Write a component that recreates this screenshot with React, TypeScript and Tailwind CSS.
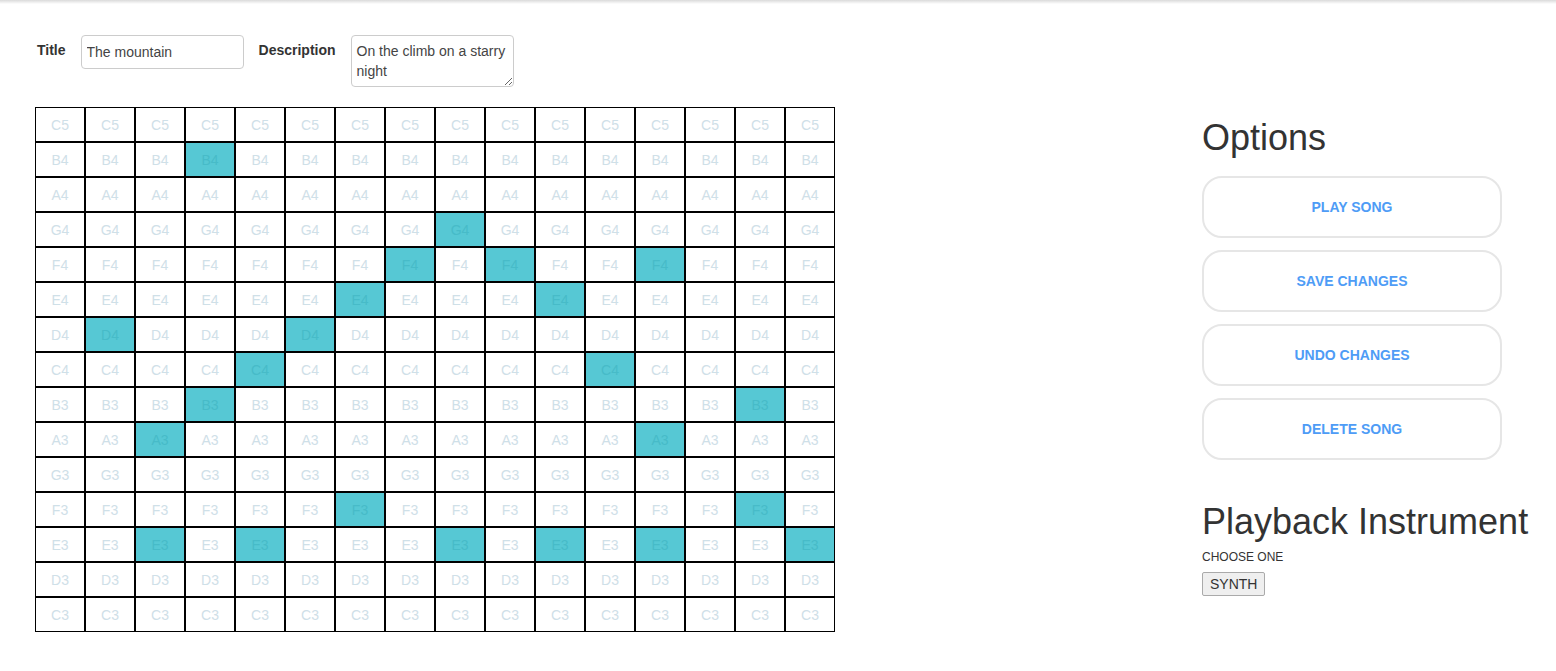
import React from 'react';

const NOTES = ['C5', 'B4', 'A4', 'G4', 'F4', 'E4', 'D4', 'C4', 'B3', 'A3', 'G3', 'F3', 'E3', 'D3', 'C3'];

// active columns for each note row
const ACTIVE: Record<string, number[]> = {
  B4: [3],
  G4: [8],
  F4: [7, 9, 12],
  E4: [6, 10],
  D4: [1, 5],
  C4: [4, 11],
  B3: [3, 14],
  A3: [2, 12],
  F3: [6, 14],
  E3: [2, 4, 8, 10, 12, 15],
};

const COLS = Array.from({ length: 16 }, (_, i) => i);

function NoteGrid() {
  return (
    <div className="grid grid-cols-[repeat(16,50px)] w-[800px]">
      {NOTES.map((note) =>
        COLS.map((col) => {
          const on = ACTIVE[note]?.includes(col);
          return (
            <div
              key={`${note}-${col}`}
              className={`h-[35px] pt-[1px] border border-black flex items-center justify-center text-[14px] ${
                on ? 'bg-[#56c8d4] text-[#47bbc8]' : 'bg-white text-[#cfe0e8]'
              }`}
            >
              {note}
            </div>
          );
        })
      )}
    </div>
  );
}

const OPTIONS = ['Play Song', 'Save Changes', 'Undo Changes', 'Delete Song'];

export default function App() {
  return (
    <div className="w-full bg-white text-[#333] font-['Liberation_Sans',Arial,sans-serif]">
      <div className="h-[4px] bg-gradient-to-b from-[#dadada] to-white" />
      <div className="flex pt-[31px] pl-[35px] pr-[54px] pb-[39px]">
        {/* Editor */}
        <div className="flex flex-col">
          <div className="flex items-start gap-[15px] ml-[2px] text-[14px]">
            <label className="mt-[5px] leading-[20px] font-bold">Title</label>
            <input
              defaultValue="The mountain"
              className="w-[163px] h-[34px] px-[5px] border border-[#ccc] rounded-[4px] text-[#444] leading-[20px] outline-none"
            />
            <label className="mt-[5px] leading-[20px] font-bold">Description</label>
            <textarea
              defaultValue="On the climb on a starry night"
              className="w-[163px] h-[52px] px-[5px] py-[5px] border border-[#ccc] rounded-[4px] text-[#444] leading-[20px] outline-none"
            />
          </div>
          <div className="mt-[20px]">
            <NoteGrid />
          </div>
        </div>

        {/* Options */}
        <div className="ml-auto w-[300px] flex flex-col">
          <h1 className="mt-[83px] text-[36px] leading-[40px] font-normal">Options</h1>
          <div className="mt-[18px] flex flex-col gap-[12px]">
            {OPTIONS.map((o) => (
              <button
                key={o}
                className="h-[62px] w-full border-2 border-[#e6e6e6] rounded-[20px] bg-white text-[14px] font-bold uppercase text-[#4e9cf6]"
              >
                {o}
              </button>
            ))}
          </div>
          <h2 className="mt-[42px] text-[36px] leading-[40px] font-normal whitespace-nowrap">Playback Instrument</h2>
          <p className="mt-[7px] text-[12px] leading-[16px] uppercase">Choose one</p>
          <div className="mt-[7px]">
            <button className="h-[24px] px-[7px] border border-[#aaa] bg-[#efefef] text-[14px] leading-[16px] rounded-[2px]">
              SYNTH
            </button>
          </div>
        </div>
      </div>
    </div>
  );
}
